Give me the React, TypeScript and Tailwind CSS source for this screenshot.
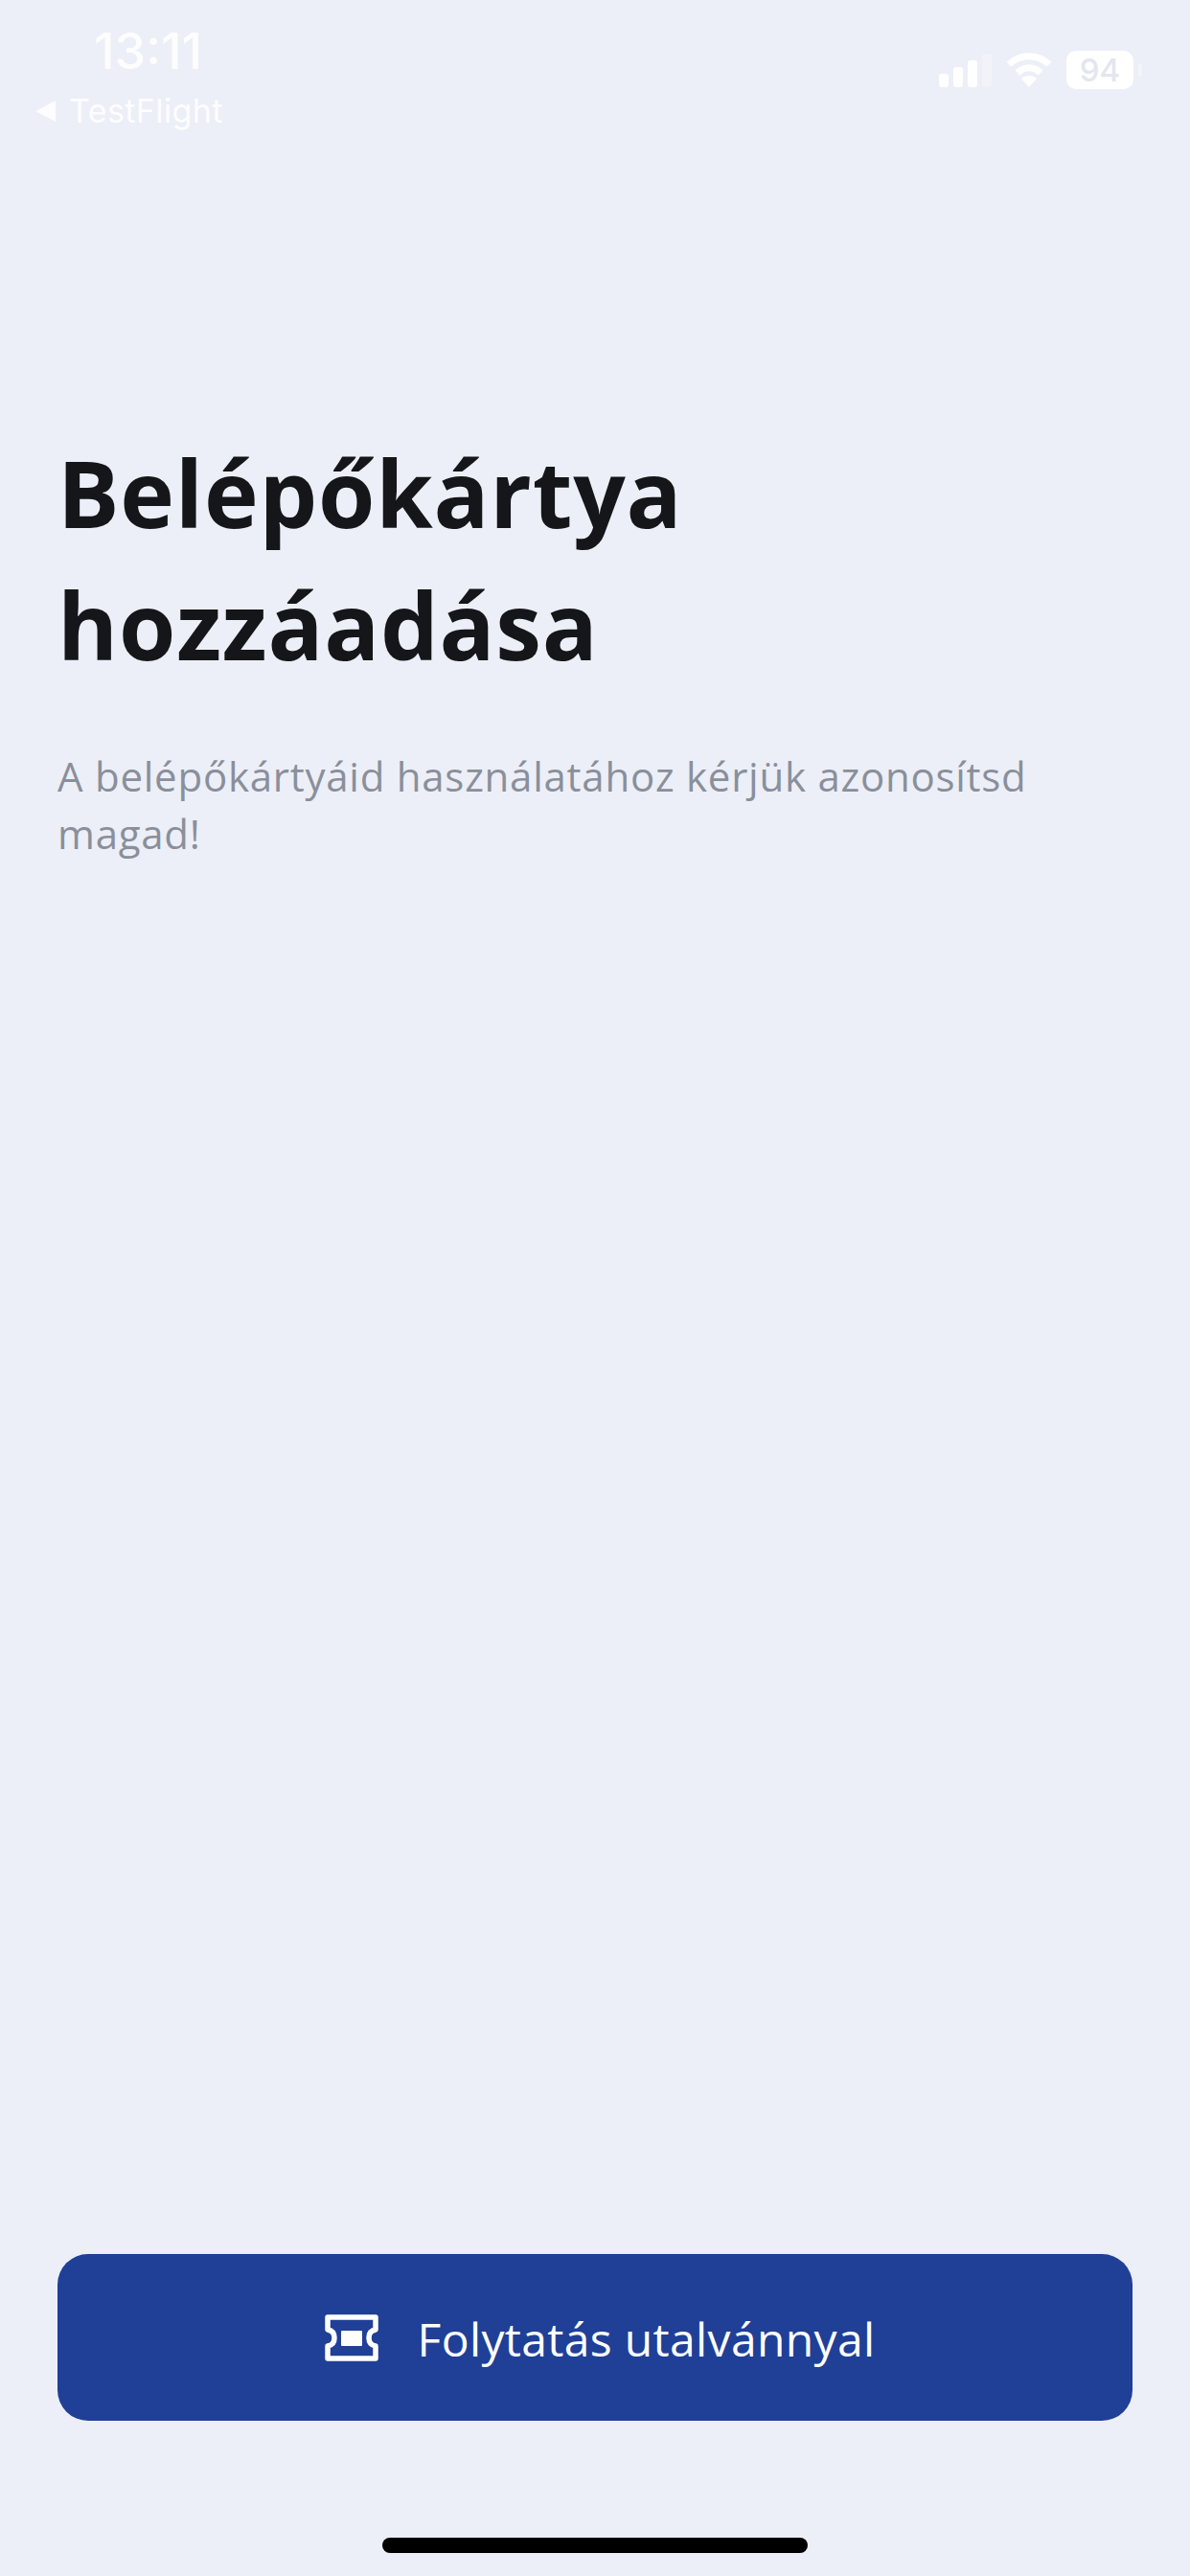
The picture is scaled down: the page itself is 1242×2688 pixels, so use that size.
const font = { fontFamily: '"Open Sans", sans-serif' };

function StatusBar() {
  return (
    <div className="flex justify-between text-white h-[136px] pl-[36px] pr-[50px] pt-[26px]" style={{ fontFamily: 'Inter, sans-serif' }}>
      <div className="flex flex-col">
        <div className="text-[52px] leading-[56px] font-medium pl-[62px] opacity-90">13:11</div>
        <div className="flex items-center text-[34px] leading-[40px] mt-[14px] gap-[12px] opacity-90">
          <svg width="24" height="24" viewBox="0 0 24 24" fill="white">
            <path d="M1 12 L22 1 V23 Z" />
          </svg>
          <span className="tracking-[0.4px]">TestFlight</span>
        </div>
      </div>
      <div className="flex items-center h-[40px] mt-[27px] gap-[15px]">
        <svg width="55" height="35" viewBox="0 0 55 35" fill="white">
          <rect x="0" y="21" width="10" height="14" rx="3" />
          <rect x="15" y="14" width="10" height="21" rx="3" />
          <rect x="30" y="7" width="10" height="28" rx="3" />
          <rect x="45" y="0" width="10" height="35" rx="3" opacity="0.25" />
        </svg>
        <svg width="48" height="36" viewBox="0 0 48 36" fill="none" stroke="white" strokeWidth="7">
          <path d="M3 12 C15 1 33 1 45 12" />
          <path d="M12 21 C19 14 29 14 36 21" />
          <path d="M24 36 L16 27 C20 23 28 23 32 27 Z" fill="white" stroke="none" />
        </svg>
        <div className="flex items-center gap-[5px]">
          <div className="w-[70px] h-[40px] rounded-[10px] bg-white text-[#e3e6ee] text-[33px] leading-[40px] font-medium text-center">94</div>
          <div className="w-[4px] h-[14px] rounded-r-full bg-white opacity-40" />
        </div>
      </div>
    </div>
  );
}

function TicketIcon() {
  return (
    <svg width="56" height="49" viewBox="0 0 56 49" fill="none" stroke="white" strokeWidth="5.5" strokeLinejoin="round">
      <path d="M3 3 H53 V16 C47 17 46 21 46 24.5 C46 28 47 32 53 33 V46 H3 V33 C9 32 10 28 10 24.5 C10 21 9 17 3 16 Z" />
      <rect x="17" y="17" width="22" height="16" rx="1" fill="white" stroke="none" />
    </svg>
  );
}

export default function App() {
  return (
    <div className="w-[1242px] h-[2688px] bg-[#eceff7] flex flex-col overflow-hidden" style={font}>
      <StatusBar />

      <div className="flex-1 flex flex-col px-[60px]">
        <h1 className="text-[96px] leading-[138px] font-bold text-[#141619] mt-[309px] tracking-[0.8px]">
          Belépőkártya
          <br />
          hozzáadása
        </h1>
        <p className="text-[42px] leading-[60px] text-[#8a8f9b] mt-[59px] tracking-[0.75px]">
          A belépőkártyáid használatához kérjük azonosítsd magad!
        </p>
      </div>

      <div className="px-[60px]">
        <button
          type="button"
          className="w-full h-[174px] rounded-[32px] bg-[#203f97] text-white flex items-center justify-center gap-[41px] pl-[10px] text-[48px] font-medium"
        >
          <TicketIcon />
          <span className="pt-[4px] tracking-[0.35px]">Folytatás utalvánnyal</span>
        </button>
      </div>

      <div className="flex justify-center pt-[122px] pb-[24px]">
        <div className="w-[444px] h-[16px] rounded-full bg-black" />
      </div>
    </div>
  );
}
